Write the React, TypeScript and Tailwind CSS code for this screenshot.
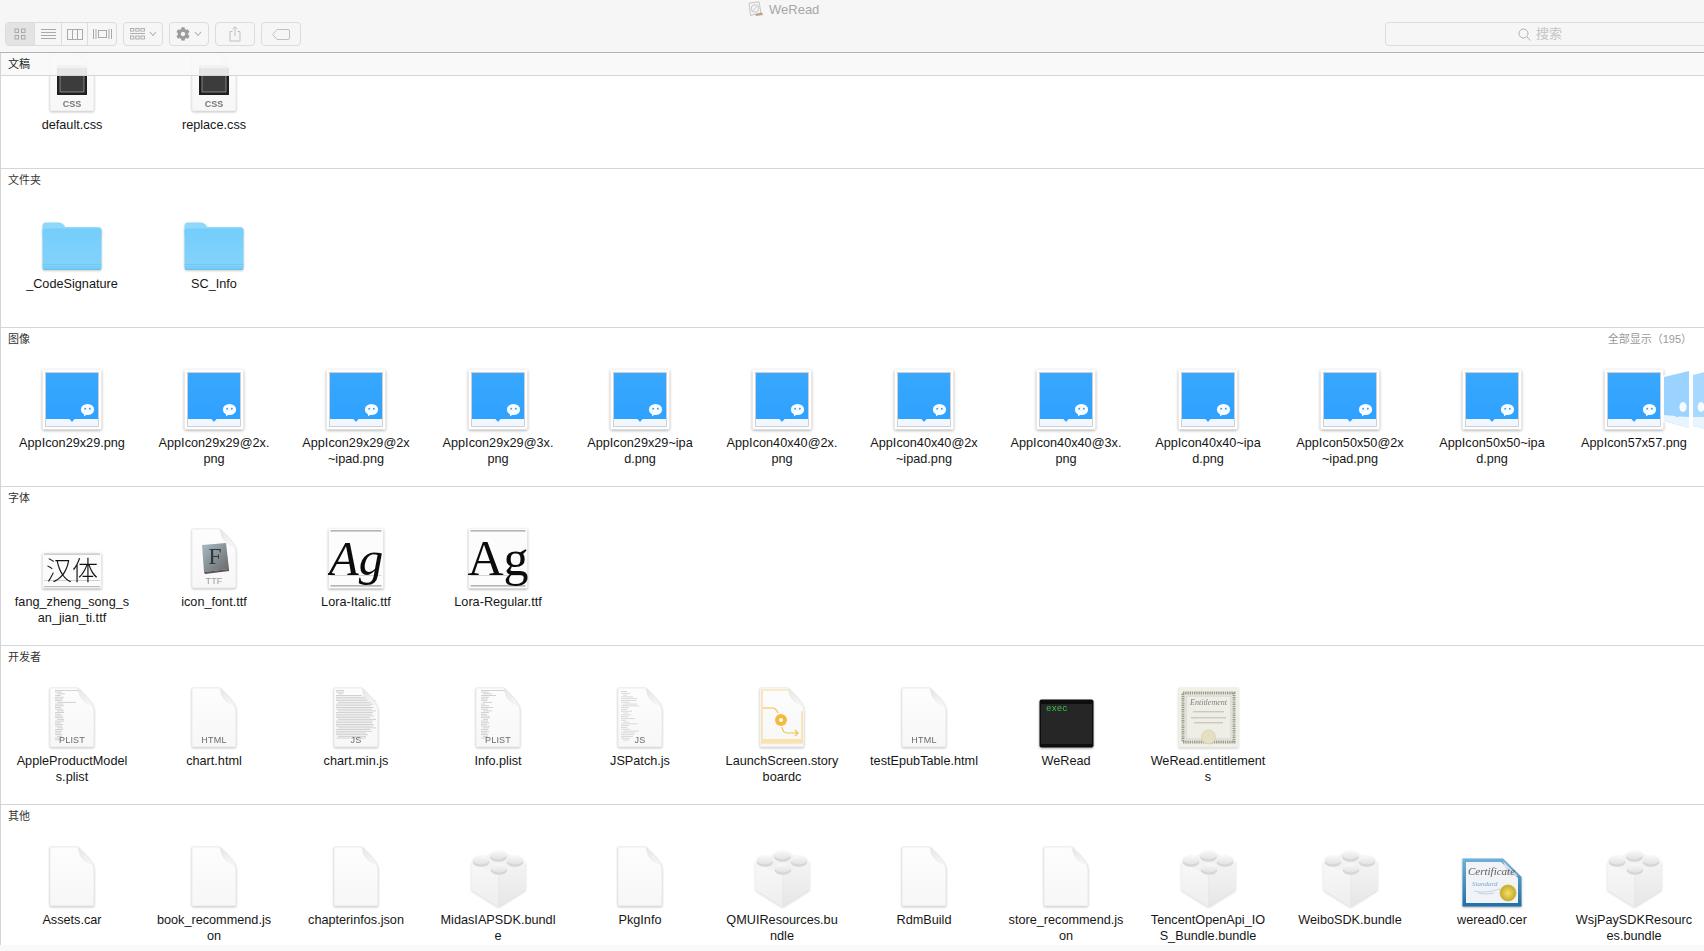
import { FaCog } from "react-icons/fa";

const mono = "Liberation Sans, Arial, sans-serif";

function Page({ children, tag, w = 46, tagColor = "#6a6a6a" }: { children?: React.ReactNode; tag?: string; w?: number; tagColor?: string }) {
  return (
    <svg width={w} height={61} viewBox="0 0 46 61" className="drop-shadow-[0_1px_1px_rgba(0,0,0,0.22)]">
      <defs>
        <linearGradient id="pg" x1="0" y1="0" x2="0" y2="1">
          <stop offset="0" stopColor="#fdfdfd" />
          <stop offset="1" stopColor="#f7f7f7" />
        </linearGradient>
        <linearGradient id="fl" x1="0" y1="0" x2="1" y2="1">
          <stop offset="0" stopColor="#e4e4e4" />
          <stop offset="1" stopColor="#fbfbfb" />
        </linearGradient>
      </defs>
      <path d="M1.5 1 H29 C34 6 40 12 43 17 Q45 20 45 24 V58.5 Q45 60 43.5 60 H2.5 Q1 60 1 58.5 V1.5 Z" fill="url(#pg)" stroke="#e2e2e2" strokeWidth="0.6" />
      {children}
      <path d="M29 1 C30 9 33 13 36 15 Q40 17 44 19 C41 13 34 6 29 1 Z" fill="url(#fl)" stroke="#e4e4e4" strokeWidth="0.4" />
      {tag && (
        <text x="23" y="56" textAnchor="middle" fontSize="9" fontFamily={mono} fill={tagColor} letterSpacing="0.2">
          {tag}
        </text>
      )}
    </svg>
  );
}

function Lines({ widths, x, y, gap, color = "#cdcdcd" }: { widths: number[]; x: number; y: number; gap: number; color?: string }) {
  return (
    <g>
      {widths.map((v, i) => (
        <rect key={i} x={x + (i % 5 === 2 ? 2 : 0)} y={y + i * gap} width={v} height={0.9} fill={color} />
      ))}
    </g>
  );
}

const plistA = [26, 7, 8, 6, 9, 8, 7, 19, 8, 9, 6, 8, 7, 9, 6, 8, 8, 7, 9, 6, 8, 7, 6, 8, 7, 6, 7, 5, 6, 6];
const plistB = [24, 8, 9, 15, 8, 7, 6, 9, 4, 8, 12, 7, 9, 8, 6, 8, 9, 5, 7, 8, 6, 9, 6, 7, 8, 6, 7, 5, 6];
const jsDense = [8, 8, 5, 26, 30, 36, 39, 37, 38, 35, 38, 36, 38, 37, 36, 38, 34, 38, 37, 36, 38, 37, 38, 34, 36, 30, 32, 28, 30];
const jsSparse = [6, 9, 4, 12, 16, 15, 9, 14, 18, 8, 6, 11, 5, 10, 7, 14, 5, 6, 17, 8, 6, 9, 16, 14, 13, 12, 9, 6];

function CssDoc() {
  return (
    <Page>
      <rect x="8" y="14" width="30" height="30" fill="#1f1f1f" />
      <rect x="8" y="14" width="30" height="3" fill="#b5b5b5" />
      <rect x="11" y="17" width="24" height="24" fill="#3c3c3c" stroke="#bbb" strokeWidth="0.6" />
      <text x="23" y="56" textAnchor="middle" fontSize="9" fontWeight="700" fontFamily={mono} fill="#777">CSS</text>
    </Page>
  );
}

function Folder() {
  return (
    <svg width={60} height={49} viewBox="0 0 60 49" className="drop-shadow-[0_1px_1px_rgba(0,0,0,0.2)]">
      <defs>
        <linearGradient id="fd" x1="0" y1="0" x2="0" y2="1">
          <stop offset="0" stopColor="#74cdfb" />
          <stop offset="1" stopColor="#84d4fb" />
        </linearGradient>
      </defs>
      <path d="M0.5 4 Q0.5 0.5 4 0.5 H17 Q20 0.5 22 3 L23 5 H56 Q59.5 5 59.5 8 V12 H0.5 Z" fill="#8ed8fc" />
      <path d="M0.5 9 Q0.5 6.5 3 6.5 H57 Q59.5 6.5 59.5 9 V45 Q59.5 48 57 48 H3 Q0.5 48 0.5 45 Z" fill="url(#fd)" />
      <rect x="0.5" y="42" width="59" height="1" fill="#69c2f1" opacity="0.6" />
      <rect x="0.5" y="44.5" width="59" height="1" fill="#69c2f1" opacity="0.7" />
      <rect x="1" y="46.5" width="58" height="1.5" fill="#62bcee" opacity="0.8" />
    </svg>
  );
}

function Bubble({ x, y, scale = 1 }: { x: number; y: number; scale?: number }) {
  return (
    <g transform={`translate(${x} ${y}) scale(${scale})`}>
      <ellipse cx="0" cy="0" rx="6.6" ry="5.6" fill="#f9fcff" />
      <path d="M-3.4 3.4 L-3.6 6.8 L-0.4 4.9 Z" fill="#f9fcff" />
      <circle cx="-2.3" cy="-0.7" r="1" fill="#39a7ff" />
      <circle cx="2.3" cy="-0.7" r="1" fill="#39a7ff" />
    </g>
  );
}

function PngIcon({ stack }: { stack?: boolean }) {
  return (
    <div className="relative">
      <svg width={60} height={61} viewBox="0 0 60 61" className="block drop-shadow-[0_1px_1.5px_rgba(0,0,0,0.35)]">
        <defs>
          <linearGradient id="bl" x1="0" y1="0" x2="0" y2="1">
            <stop offset="0" stopColor="#38a7fd" />
            <stop offset="1" stopColor="#2fa2ff" />
          </linearGradient>
        </defs>
        <rect x="0.5" y="0.5" width="59" height="60" rx="1" fill="#fff" />
        <rect x="3.5" y="3.5" width="53" height="54" fill="#f0f7fe" stroke="#bdbdbd" strokeWidth="0.7" />
        <rect x="4" y="4" width="52" height="46" fill="url(#bl)" />
        <path d="M27.5 50 H32.5 L30 53 Z" fill="#2fa2ff" />
        <Bubble x={45.5} y={40.5} />
      </svg>
      {stack && (
        <svg width={42} height={66} viewBox="0 0 42 66" className="absolute left-[59px] top-[-2px]">
          <path d="M0 8.5 L28 1 V64 L0 55.5 Z" fill="#fff" opacity="0.85" />
          <path d="M1 10 L26 4 V61 L1 54 Z" fill="#9ad3ff" />
          <path d="M1 48 L12 49 L14 50.5 L16 49.5 L26 50 V61 L1 54 Z" fill="#e9f5fe" />
          <ellipse cx="20" cy="40" rx="3.6" ry="5" fill="#f7fbff" />
          <path d="M29 7 L42 3 V65 L29 61 Z" fill="#fff" opacity="0.85" />
          <path d="M30 8 L42 5 V62 L30 59 Z" fill="#a7d8ff" />
          <ellipse cx="38" cy="40" rx="3.4" ry="5" fill="#f7fbff" />
          <path d="M30 50 H42 V62 L30 59 Z" fill="#e9f5fe" />
        </svg>
      )}
    </div>
  );
}

function CjkFont() {
  return (
    <svg width={60} height={37} viewBox="0 0 60 37" className="drop-shadow-[0_1px_1px_rgba(0,0,0,0.35)]">
      <rect x="0.5" y="0.5" width="59" height="36" fill="#fbfbfb" />
      <rect x="2" y="1.5" width="56" height="1.2" fill="#bcbcbc" />
      <rect x="2" y="28" width="56" height="0.7" fill="#bcbcbc" />
      <rect x="2" y="34" width="56" height="1.2" fill="#bcbcbc" />
      <text x="30" y="28" textAnchor="middle" fontSize="26" fontWeight="300" fontFamily="Noto Sans CJK SC, sans-serif" fill="#111">汉体</text>
    </svg>
  );
}

function AgFont({ italic, w }: { italic?: boolean; w: number }) {
  return (
    <svg width={w} height={61} viewBox={`0 0 ${w} 61`} className="drop-shadow-[0_1px_1px_rgba(0,0,0,0.35)]">
      <rect x="0.5" y="0.5" width={w - 1} height="60" fill="#fcfcfc" />
      <rect x="2.5" y="2" width={w - 5} height="1.6" fill="#b4b4b4" />
      <rect x="2.5" y="47" width={w - 5} height="0.7" fill="#c4c4c4" />
      <rect x="2.5" y="57" width={w - 5} height="1.6" fill="#b4b4b4" />
      <text x={w / 2} y="47" textAnchor="middle" fontSize={italic ? 49 : 50} fontStyle={italic ? "italic" : "normal"} fontFamily="Liberation Serif, serif" fill="#0b0b0b">Ag</text>
    </svg>
  );
}

function TtfDoc() {
  return (
    <Page tag="TTF" tagColor="#999">
      <defs>
        <linearGradient id="tf" x1="0" y1="0" x2="1" y2="1">
          <stop offset="0" stopColor="#a9bcc6" />
          <stop offset="1" stopColor="#666" />
        </linearGradient>
      </defs>
      <path d="M11 17 L35 15 L38 41 L13 44 Z" fill="url(#tf)" />
      <path d="M13 44 L38 41 L38 43 L14 46 Z" fill="#555" />
      <text x="24" y="36" textAnchor="middle" fontSize="24" fontFamily="Liberation Serif, serif" fill="#2f3a40">F</text>
    </Page>
  );
}

function StoryDoc() {
  return (
    <Page>
      <path d="M3 43 V3 H29" fill="none" stroke="#f7d78e" strokeWidth="1.2" />
      <path d="M3 43 V56 H43 V24" fill="none" stroke="#f7d78e" strokeWidth="1.2" />
      <path d="M4 21 H13 Q17 21 19 26" fill="none" stroke="#f2bf4e" strokeWidth="1.2" />
      <circle cx="22" cy="33" r="6" fill="#f3bb3d" />
      <circle cx="22" cy="33" r="2" fill="#fff" />
      <path d="M23 40 Q24 46 28 46 H39 M36 43 L39 46 L36 49" fill="none" stroke="#f2bf4e" strokeWidth="1.2" />
      <rect x="4" y="52" width="38" height="3.5" fill="#f9e3ad" />
    </Page>
  );
}

function Exec() {
  return (
    <svg width={55} height={49} viewBox="0 0 55 49" className="drop-shadow-[0_1px_1px_rgba(0,0,0,0.35)]">
      <rect x="0.5" y="0.5" width="54" height="48" rx="2" fill="#0e0e0e" />
      <rect x="2" y="5" width="51" height="40" fill="#262626" />
      <text x="7" y="12" fontSize="9" fontFamily="Liberation Mono, monospace" fill="#3cc34d">exec</text>
    </svg>
  );
}

function Entitlement() {
  return (
    <svg width={61} height={61} viewBox="0 0 61 61" className="drop-shadow-[0_1px_1px_rgba(0,0,0,0.2)]">
      <rect x="0.5" y="0.5" width="60" height="60" fill="#f1f0e4" />
      <rect x="5" y="6" width="51" height="49" fill="none" stroke="#9b9b95" strokeWidth="3" strokeDasharray="1.4 0.8" />
      <rect x="8" y="9" width="45" height="43" fill="#efeee4" stroke="#b5b5ae" strokeWidth="0.5" />
      <text x="30.5" y="18" textAnchor="middle" fontSize="8" fontStyle="italic" fontFamily="Liberation Serif, serif" fill="#808080">Entitlement</text>
      <rect x="15" y="24" width="31" height="1.4" fill="#c9c9c0" />
      <rect x="13" y="30" width="35" height="1.4" fill="#c9c9c0" />
      <rect x="16" y="35" width="29" height="1.4" fill="#c9c9c0" />
      <circle cx="30.5" cy="50" r="7" fill="#e6dfc4" stroke="#cfc7a6" strokeWidth="0.6" />
    </svg>
  );
}

function Lego() {
  return (
    <svg width={55} height={57} viewBox="0 0 55 57" className="drop-shadow-[0_1px_1px_rgba(0,0,0,0.16)]">
      <defs>
        <linearGradient id="lg1" x1="0" y1="0" x2="0" y2="1">
          <stop offset="0" stopColor="#f9f9f9" />
          <stop offset="1" stopColor="#e2e2e2" />
        </linearGradient>
        <linearGradient id="lg2" x1="0" y1="0" x2="0" y2="1">
          <stop offset="0" stopColor="#f8f8f8" />
          <stop offset="1" stopColor="#eeeeee" />
        </linearGradient>
        <linearGradient id="lg3" x1="0" y1="0" x2="0" y2="1">
          <stop offset="0" stopColor="#f4f4f4" />
          <stop offset="1" stopColor="#e6e6e6" />
        </linearGradient>
      </defs>
      <path d="M27.5 25 L0.5 12 V40 L27.5 57 Z" fill="url(#lg2)" />
      <path d="M27.5 25 L54.5 12 V40 L27.5 57 Z" fill="url(#lg3)" />
      <path d="M27.5 1 L54.5 12 L27.5 25 L0.5 12 Z" fill="#f2f2f2" stroke="#f9f9f9" strokeWidth="0.5" />
      {[
        [27.5, 5],
        [10, 10],
        [44, 10],
        [28, 18],
      ].map(([x, y]) => (
        <g key={`${x}-${y}`}>
          <ellipse cx={x} cy={y + 2.2} rx="8.2" ry="4.6" fill="#d6d6d6" />
          <ellipse cx={x} cy={y} rx="8.2" ry="4.4" fill="url(#lg1)" />
        </g>
      ))}
    </svg>
  );
}

function Cert() {
  return (
    <svg width={60} height={49} viewBox="0 0 60 49" className="drop-shadow-[0_1px_1px_rgba(0,0,0,0.3)]">
      <defs>
        <linearGradient id="ct" x1="0" y1="0" x2="0" y2="1">
          <stop offset="0" stopColor="#6fb1da" />
          <stop offset="1" stopColor="#1f6ea9" />
        </linearGradient>
        <radialGradient id="sl">
          <stop offset="0" stopColor="#f3e26b" />
          <stop offset="1" stopColor="#c5a92a" />
        </radialGradient>
      </defs>
      <path d="M0.5 0.5 H41 L59.5 19 V48.5 H0.5 Z" fill="url(#ct)" />
      <path d="M4 4 H39 L56 20 V45 H4 Z" fill="#f1f3f6" />
      <path d="M41 3 L56 18 L46 17 Z" fill="#d7dde3" />
      <text x="6" y="17" fontSize="11" fontStyle="italic" fontFamily="Liberation Serif, serif" fill="#5c5c5c">Certificate</text>
      <text x="10" y="28" fontSize="7" fontStyle="italic" fontFamily="Liberation Serif, serif" fill="#7da9d1">Standard</text>
      <path d="M12 33 Q22 36 38 31 M16 35 Q24 37 32 35" fill="none" stroke="#9cc0e0" strokeWidth="0.6" />
      <circle cx="46" cy="35" r="8" fill="url(#sl)" stroke="#c9b137" strokeDasharray="1 0.7" strokeWidth="1" />
    </svg>
  );
}

type Item = [string, React.ReactNode];

const images: Item[] = [
  ["AppIcon29x29.png", <PngIcon />],
  ["AppIcon29x29@2x.\npng", <PngIcon />],
  ["AppIcon29x29@2x\n~ipad.png", <PngIcon />],
  ["AppIcon29x29@3x.\npng", <PngIcon />],
  ["AppIcon29x29~ipa\nd.png", <PngIcon />],
  ["AppIcon40x40@2x.\npng", <PngIcon />],
  ["AppIcon40x40@2x\n~ipad.png", <PngIcon />],
  ["AppIcon40x40@3x.\npng", <PngIcon />],
  ["AppIcon40x40~ipa\nd.png", <PngIcon />],
  ["AppIcon50x50@2x\n~ipad.png", <PngIcon />],
  ["AppIcon50x50~ipa\nd.png", <PngIcon />],
  ["AppIcon57x57.png", <PngIcon stack />],
];

const fonts: Item[] = [
  ["fang_zheng_song_s\nan_jian_ti.ttf", <CjkFont />],
  ["icon_font.ttf", <TtfDoc />],
  ["Lora-Italic.ttf", <AgFont italic w={56} />],
  ["Lora-Regular.ttf", <AgFont w={60} />],
];

const dev: Item[] = [
  ["AppleProductModel\ns.plist", <Page tag="PLIST"><Lines widths={plistA} x={6} y={3} gap={1.7} /></Page>],
  ["chart.html", <Page tag="HTML" />],
  ["chart.min.js", <Page tag="JS"><Lines widths={jsDense} x={3} y={3} gap={1.7} /></Page>],
  ["Info.plist", <Page tag="PLIST"><Lines widths={plistB} x={6} y={3} gap={1.7} /></Page>],
  ["JSPatch.js", <Page tag="JS"><Lines widths={jsSparse} x={4} y={4} gap={1.8} color="#d6d6d6" /></Page>],
  ["LaunchScreen.story\nboardc", <StoryDoc />],
  ["testEpubTable.html", <Page tag="HTML" />],
  ["WeRead", <Exec />],
  ["WeRead.entitlement\ns", <Entitlement />],
];

const other: Item[] = [
  ["Assets.car", <Page />],
  ["book_recommend.js\non", <Page />],
  ["chapterinfos.json", <Page />],
  ["MidasIAPSDK.bundl\ne", <Lego />],
  ["PkgInfo", <Page />],
  ["QMUIResources.bu\nndle", <Lego />],
  ["RdmBuild", <Page />],
  ["store_recommend.js\non", <Page />],
  ["TencentOpenApi_IO\nS_Bundle.bundle", <Lego />],
  ["WeiboSDK.bundle", <Lego />],
  ["weread0.cer", <Cert />],
  ["WsjPaySDKResourc\nes.bundle", <Lego />],
];

function Grid({ items, iconH }: { items: Item[]; iconH: string }) {
  return (
    <div className="grid grid-cols-[repeat(12,142px)]">
      {items.map(([name, icon]) => (
        <div key={name} className="flex flex-col items-center">
          <div className={`flex items-end justify-center ${iconH}`}>{icon}</div>
          <div className="mt-[5px] whitespace-pre text-center text-[12.7px] leading-[16px] text-[#161616]">{name}</div>
        </div>
      ))}
    </div>
  );
}

function Section({ title, items, right, last }: { title: string; items: Item[]; right?: string; last?: boolean }) {
  return (
    <section className={last ? "h-[140px] overflow-hidden" : "h-[159px] border-b border-[#d6d6d6] overflow-hidden"}>
      <div className="flex h-[24px] items-center justify-between pb-px pl-[7px] pr-[18px] text-[11px] text-[#333]">
        <span>{title}</span>
        {right && <span className="mr-[-6px] text-[#999]">{right}</span>}
      </div>
      <Grid items={items} iconH="h-[78px]" />
    </section>
  );
}

function Seg({ children, active, w }: { children: React.ReactNode; active?: boolean; w: string }) {
  return (
    <div className={`flex h-full items-center justify-center border-r border-[#dcdcdc] last:border-r-0 ${w} ${active ? "bg-[#e3e3e3]" : ""}`}>
      {children}
    </div>
  );
}

function Btn({ children }: { children: React.ReactNode }) {
  return (
    <div className="ml-[6px] flex h-[24px] w-[40px] items-center justify-center gap-[4px] rounded-[4px] border border-[#dcdcdc]">
      {children}
    </div>
  );
}

function Chev() {
  return (
    <svg width="8" height="6" viewBox="0 0 8 6">
      <path d="M1 1 L4 4.5 L7 1" fill="none" stroke="#b0b0b0" strokeWidth="1.1" />
    </svg>
  );
}

function Toolbar() {
  const s = "#a9a9a9";
  return (
    <header className="h-[53px] border-b border-[#b2b2b2] bg-[#f6f6f6]">
      <div className="flex h-[18px] items-center gap-[5px] pl-[748px] text-[13px] leading-none text-[#a6a6a6]">
        <svg width="16" height="16" viewBox="0 0 16 16">
          <path d="M1 2 L11 0.8 L13 12 L2.5 14.5 Z" fill="#f3f3f3" stroke="#bbb" strokeWidth="0.8" />
          <circle cx="7" cy="7.5" r="3.8" fill="none" stroke="#c5c5c5" strokeWidth="0.9" />
          <path d="M5 10 L9 5" stroke="#c5c5c5" strokeWidth="0.9" />
          <path d="M7 13 L14 11.5 L15 14 L8 15 Z" fill="#b7a58a" />
        </svg>
        <span>WeRead</span>
      </div>
      <div className="mt-[4px] flex h-[24px] items-center pl-[5px]">
        <div className="flex h-[24px] overflow-hidden rounded-[4px] border border-[#dcdcdc]">
          <Seg active w="w-[29px]">
            <svg width="12" height="12" viewBox="0 0 12 12" fill="none" stroke={s} strokeWidth="1">
              <rect x="1" y="1" width="3.5" height="3.5" />
              <rect x="7.5" y="1" width="3.5" height="3.5" />
              <rect x="1" y="7.5" width="3.5" height="3.5" />
              <rect x="7.5" y="7.5" width="3.5" height="3.5" />
            </svg>
          </Seg>
          <Seg w="w-[27px]">
            <svg width="15" height="12" viewBox="0 0 15 12" stroke={s} strokeWidth="1">
              <path d="M0 1.5 H15 M0 4.5 H15 M0 7.5 H15 M0 10.5 H15" />
            </svg>
          </Seg>
          <Seg w="w-[26px]">
            <svg width="16" height="11" viewBox="0 0 16 11" fill="none" stroke={s} strokeWidth="1">
              <rect x="0.5" y="0.5" width="15" height="10" />
              <path d="M5.5 0.5 V10.5 M10.5 0.5 V10.5" />
            </svg>
          </Seg>
          <Seg w="w-[28px]">
            <svg width="19" height="12" viewBox="0 0 19 12" fill="none" stroke={s} strokeWidth="1">
              <rect x="5.5" y="2.5" width="8" height="7" />
              <path d="M0.5 1 V11 M3 1 V11 M16 1 V11 M18.5 1 V11" />
            </svg>
          </Seg>
        </div>
        <Btn>
          <svg width="15" height="12" viewBox="0 0 15 12" fill="none" stroke={s} strokeWidth="0.9">
            <rect x="0.5" y="0.5" width="3.4" height="2.6" />
            <rect x="5.8" y="0.5" width="3.4" height="2.6" />
            <rect x="11" y="0.5" width="3.4" height="2.6" />
            <path d="M0 5.5 H15" />
            <rect x="0.5" y="8" width="3.4" height="3" />
            <rect x="5.8" y="8" width="3.4" height="3" />
            <rect x="11" y="8" width="3.4" height="3" />
          </svg>
          <Chev />
        </Btn>
        <Btn>
          <FaCog size={14} color="#9c9c9c" />
          <Chev />
        </Btn>
        <Btn>
          <svg width="12" height="16" viewBox="0 0 12 16" fill="none" stroke="#c0c0c0" strokeWidth="1">
            <path d="M3.5 5.5 H1 V15 H11 V5.5 H8.5 M6 10 V1 M3.5 3.2 L6 0.8 L8.5 3.2" />
          </svg>
        </Btn>
        <Btn>
          <svg width="18" height="11" viewBox="0 0 18 11" fill="none" stroke="#c0c0c0" strokeWidth="1">
            <path d="M5 0.5 H16 Q17.5 0.5 17.5 2 V9 Q17.5 10.5 16 10.5 H5 L0.7 5.5 Z" />
          </svg>
        </Btn>
        <div className="ml-auto mr-[-6px] flex h-[24px] w-[325px] flex-none items-center gap-[5px] rounded-[4px] border border-[#dcdcdc] pl-[132px] text-[13px] text-[#c4c4c4]">
          <svg width="13" height="13" viewBox="0 0 13 13" fill="none" stroke="#b0b0b0" strokeWidth="1">
            <circle cx="5.5" cy="5.5" r="4.5" />
            <path d="M9 9 L12.5 12.5" />
          </svg>
          <span>搜索</span>
        </div>
      </div>
    </header>
  );
}

export default function App() {
  return (
    <div className="h-[951px] w-[1704px] overflow-hidden bg-white font-['Liberation_Sans','Noto_Sans_CJK_SC',sans-serif]">
      <Toolbar />
      <main className="border-l border-[#d4d4d4]">
        <section className="relative h-[116px] overflow-hidden border-b border-[#d6d6d6]">
          <Grid
            iconH="h-[59px]"
            items={[
              ["default.css", <CssDoc />],
              ["replace.css", <CssDoc />],
            ]}
          />
          <div className="absolute inset-x-0 top-0 flex h-[23px] items-center border-b border-[#d6d6d6] bg-[#f8f8f8]/90 pl-[7px] text-[11px] text-[#222]">
            文稿
          </div>
        </section>
        <Section title="文件夹" items={[["_CodeSignature", <Folder />], ["SC_Info", <Folder />]]} />
        <Section title="图像" items={images} right="全部显示（195）" />
        <Section title="字体" items={fonts} />
        <Section title="开发者" items={dev} />
        <Section title="其他" items={other} last />
      </main>
      <div className="h-[6px] bg-[#f9f9f9]" />
    </div>
  );
}
